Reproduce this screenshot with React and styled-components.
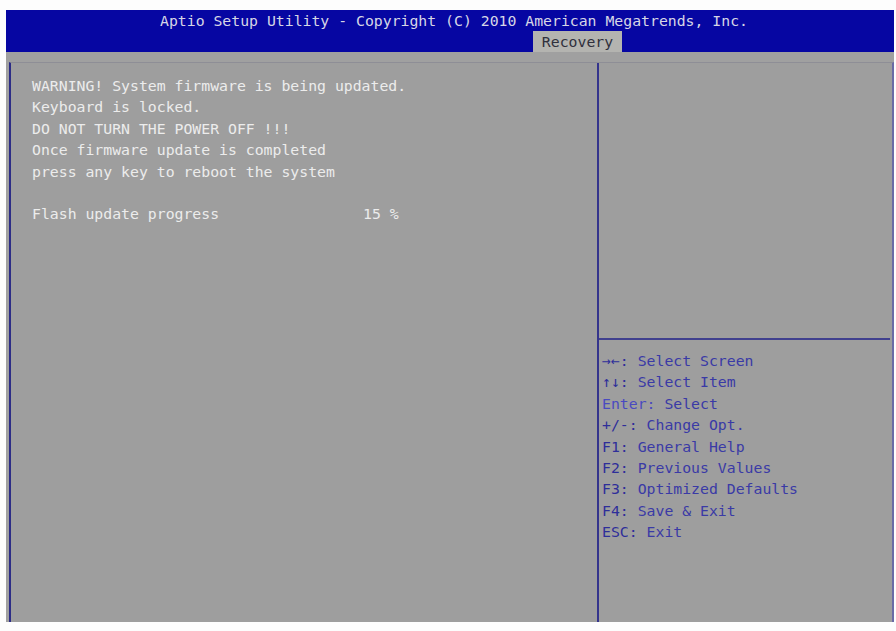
import React from 'react';
import styled, {createGlobalStyle} from 'styled-components';

const GlobalStyle = createGlobalStyle`
  html, body {
    margin: 0;
    padding: 0;
    background: #fdfdfd;
  }
  body {
    font-family: "DejaVu Sans Mono", "Liberation Mono", monospace;
    font-size: 14.8px;
  }
`;

const Screen = styled.div`
  width: 888px;
  padding: 10px 0 0 6px;
`;

const Header = styled.header`
  background: #0606a2;
  height: 42px;
  display: flex;
  flex-direction: column;
`;

const Title = styled.div`
  height: 21px;
  line-height: 21px;
  text-align: center;
  color: #d6d6e6;
  padding-left: 8px;
`;

const Tabs = styled.div`
  height: 21px;
  display: flex;
  padding-left: 527px;
`;

const Tab = styled.div`
  width: 89px;
  background: ${p => (p.active ? '#b4b4b0' : 'transparent')};
  color: #30303c;
  line-height: 21px;
  text-align: center;
`;

const Body = styled.div`
  background: #a0a0a0;
  padding: 10px 0 0 3px;
  height: 560px;
  display: flex;
`;

const Frame = styled.div`
  flex: 1;
  display: grid;
  grid-template-columns: 588px 291px;
  border-left: 2px solid #2c2c86;
  border-right: 2px solid #6a6aa6;
  border-top: 1px solid #8e8e96;
  background: #9e9e9e;
`;

const Main = styled.section`
  padding: 12px 0 0 21px;
  border-right: 2px solid #34348c;
  color: #ececec;
`;

const Line = styled.div`
  height: 21.4px;
  line-height: 21.4px;
  white-space: pre;
`;

const Gap = styled.div`
  height: 21.4px;
`;

const Progress = styled.div`
  display: flex;
  height: 21.4px;
  line-height: 21.4px;
`;

const Label = styled.span`
  width: 331px;
`;

const Side = styled.aside`
  display: flex;
  flex-direction: column;
`;

const HelpBox = styled.div`
  height: 275px;
  border-bottom: 2px solid #40408e;
`;

const Keys = styled.div`
  padding: 10px 0 0 3px;
  color: #3a3aa6;
`;

const Key = styled.span`
  color: ${p => (p.light ? '#4a4ac0' : '#2e2e9a')};
`;

const keys = [
  ['\u2192\u2190', 'Select Screen'],
  ['\u2191\u2193', 'Select Item'],
  ['Enter', 'Select'],
  ['+/-', 'Change Opt.'],
  ['F1', 'General Help'],
  ['F2', 'Previous Values'],
  ['F3', 'Optimized Defaults'],
  ['F4', 'Save & Exit'],
  ['ESC', 'Exit'],
];

export default function App() {
  return (
    <Screen>
      <GlobalStyle/>
      <Header>
        <Title>Aptio Setup Utility - Copyright (C) 2010 American Megatrends, Inc.</Title>
        <Tabs>
          <Tab active>Recovery</Tab>
        </Tabs>
      </Header>
      <Body>
        <Frame>
          <Main>
            <Line>WARNING! System firmware is being updated.</Line>
            <Line>Keyboard is locked.</Line>
            <Line>DO NOT TURN THE POWER OFF !!!</Line>
            <Line>Once firmware update is completed</Line>
            <Line>press any key to reboot the system</Line>
            <Gap/>
            <Progress>
              <Label>Flash update progress</Label>
              <span>15 %</span>
            </Progress>
          </Main>
          <Side>
            <HelpBox/>
            <Keys>
              {keys.map(([k, text]) => (
                <Line key={k}>
                  <Key light={k === 'Enter'}>{k}:</Key> {text}
                </Line>
              ))}
            </Keys>
          </Side>
        </Frame>
      </Body>
    </Screen>
  );
}
